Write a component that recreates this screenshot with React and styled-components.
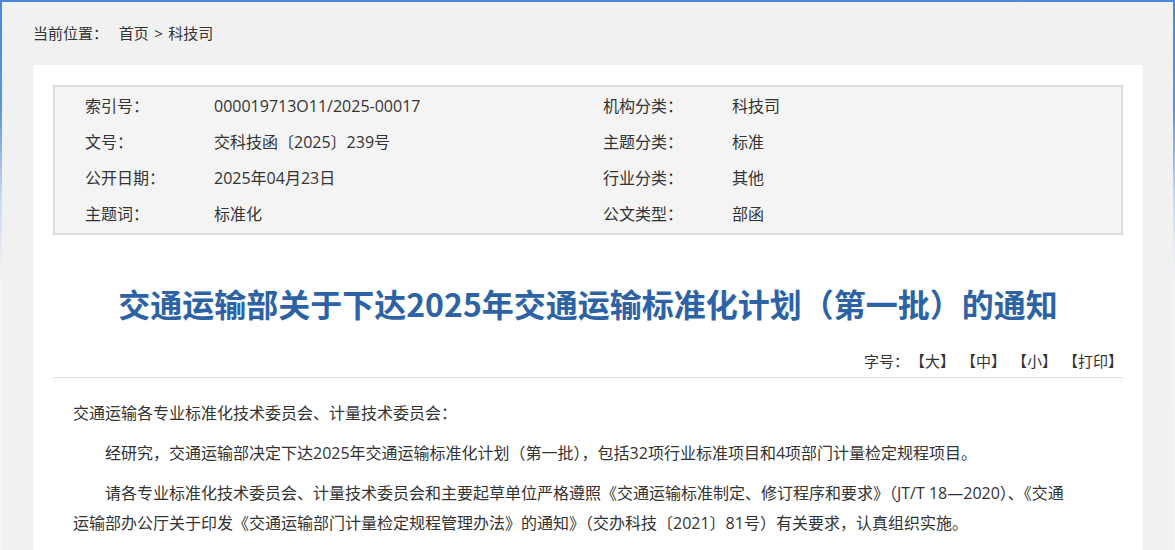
import React from "react";
import styled, { createGlobalStyle } from "styled-components";

const GlobalStyle = createGlobalStyle`
  html, body {
    margin: 0;
    padding: 0;
    background: #f1f1f1;
  }
  body {
    font-family: "Open Sans", "Noto Sans CJK SC", "Noto Sans", sans-serif;
    color: #333;
  }
  * { box-sizing: border-box; }
`;

const Frame = styled.div`
  min-height: 100vh;
  border: 2px solid #4a87da;
  border-image: linear-gradient(to bottom, #4a87da 0px, #5d95df 110px, #c9dbf3 200px, #f4f4f4 280px, #f6f6f6 100%) 2;
  padding: 21px 30px 0 31px;
`;

const Breadcrumb = styled.div`
  font-size: 15px;
  line-height: 20px;
  height: 20px;
  color: #333;
  white-space: pre;
  word-spacing: 1.5px;
`;

const Card = styled.div`
  margin-top: 22px;
  background: #fff;
  padding: 20px 20px 20px;
`;

const InfoBox = styled.div`
  border: 2px solid #dddddd;
  background: #f4f4f4;
  padding: 1px 0 1px 30px;
  display: grid;
  grid-template-columns: 129px 389px 129px 1fr;
  grid-auto-rows: 36px;
  align-items: center;
  font-size: 16px;
  color: #333;
`;

const Cell = styled.div`
  line-height: 20px;
  white-space: nowrap;
`;

const Title = styled.h1`
  margin: 48px 0 0;
  text-align: center;
  font-family: "Noto Sans CJK SC", sans-serif;
  font-size: 32px;
  line-height: 40px;
  font-weight: 700;
  color: #2d63a6;
`;

const Tools = styled.div`
  margin-top: 28px;
  display: flex;
  justify-content: flex-end;
  padding: 0 0 6px 0;
  border-bottom: 1px solid #dddddd;
  font-size: 15px;
  line-height: 20px;
  color: #333;
  white-space: pre;
`;

const ToolLink = styled.a`
  color: #333;
  text-decoration: none;
  cursor: pointer;
  margin-left: ${(p) => (p.$first ? "1px" : "6px")};
`;

const Body = styled.div`
  padding: 20px 20px 0;
  font-size: 16px;
  line-height: 30px;
  color: #333;
`;

const Para = styled.p`
  margin: 0 0 10px;
  text-indent: ${(p) => (p.$indent ? "2em" : "0")};
`;

const info = [
  ["索引号：", "000019713O11/2025-00017", "机构分类：", "科技司"],
  ["文号：", "交科技函〔2025〕239号", "主题分类：", "标准"],
  ["公开日期：", "2025年04月23日", "行业分类：", "其他"],
  ["主题词：", "标准化", "公文类型：", "部函"],
];

export default function App() {
  return (
    <>
      <GlobalStyle />
      <Frame>
        <Breadcrumb>当前位置：  首页 &gt; 科技司</Breadcrumb>
        <Card>
          <InfoBox>
            {info.map((row, i) =>
              row.map((c, j) => <Cell key={`${i}-${j}`}>{c}</Cell>)
            )}
          </InfoBox>
          <Title>交通运输部关于下达2025年交通运输标准化计划（第一批）的通知</Title>
          <Tools>
            <span>字号：</span>
            <ToolLink $first>【大】</ToolLink>
            <ToolLink>【中】</ToolLink>
            <ToolLink>【小】</ToolLink>
            <ToolLink>【打印】</ToolLink>
          </Tools>
          <Body>
            <Para>交通运输各专业标准化技术委员会、计量技术委员会：</Para>
            <Para $indent>
              经研究，交通运输部决定下达2025年交通运输标准化计划（第一批），包括32项行业标准项目和4项部门计量检定规程项目。
            </Para>
            <Para $indent>
              请各专业标准化技术委员会、计量技术委员会和主要起草单位严格遵照《交通运输标准制定、修订程序和要求》（JT/T 18—2020）、《交通
              <br />
              运输部办公厅关于印发《交通运输部门计量检定规程管理办法》的通知》（交办科技〔2021〕81号）有关要求，认真组织实施。
            </Para>
          </Body>
        </Card>
      </Frame>
    </>
  );
}
